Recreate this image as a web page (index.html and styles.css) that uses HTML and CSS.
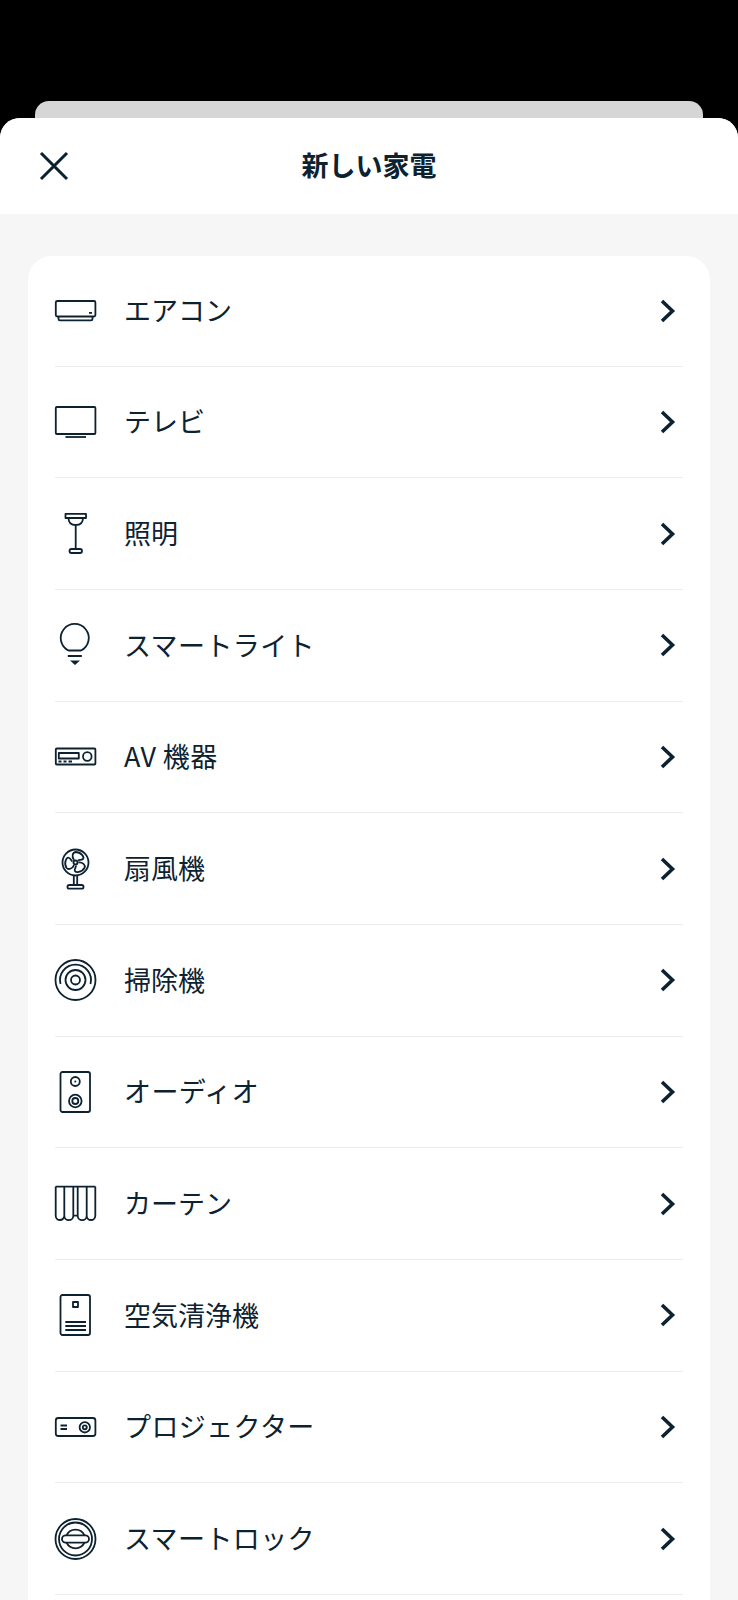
FILE: index.html
```html
<!DOCTYPE html>
<html lang="ja">
<head>
<meta charset="utf-8">
<title>新しい家電</title>
<link rel="stylesheet" href="styles.css">
</head>
<body>
<div class="screen">
  <div class="back-sheet"></div>
  <section class="sheet">
    <header class="sheet-header">
      <svg class="close" viewBox="0 0 30 30"><path d="M2 2 L28 28 M28 2 L2 28"/></svg>
      <h1 class="title">新しい家電</h1>
    </header>
    <main class="content">
      <ul class="card">
        <li class="row">
          <svg class="icon" viewBox="0 0 42 42"><rect x="0.8" y="11" width="39.6" height="15.5" rx="1.5"/><path d="M3.5 26.5 V29 Q3.5 30.3 5 30.3 H36 Q37.5 30.3 37.5 29 V26.5 M34 22.8 H37"/></svg>
          <span class="label">エアコン</span>
          <svg class="chev" viewBox="0 0 16 24"><path d="M2 2 L12.5 12 L2 22"/></svg>
        </li>
        <li class="row">
          <svg class="icon" viewBox="0 0 42 42"><rect x="0.8" y="6" width="39.6" height="27" rx="1"/><path d="M10.5 36 H31"/></svg>
          <span class="label">テレビ</span>
          <svg class="chev" viewBox="0 0 16 24"><path d="M2 2 L12.5 12 L2 22"/></svg>
        </li>
        <li class="row">
          <svg class="icon" viewBox="0 0 42 42"><path d="M10.5 0.8 H31 V5 H10.5 Z M13.5 5 Q13.5 12 20.7 12 Q28 12 28 5 M20.7 12 V36"/><rect x="14.5" y="36" width="12.5" height="4" rx="2"/></svg>
          <span class="label">照明</span>
          <svg class="chev" viewBox="0 0 16 24"><path d="M2 2 L12.5 12 L2 22"/></svg>
        </li>
        <li class="row">
          <svg class="icon" viewBox="0 0 42 42"><path d="M13.5 26.5 A14 14 0 1 1 26 26.5 Z M12.8 32 H26.8"/><path class="solid" d="M15 36.5 H25 L20 41 Z"/></svg>
          <span class="label wide">スマートライト</span>
          <svg class="chev" viewBox="0 0 16 24"><path d="M2 2 L12.5 12 L2 22"/></svg>
        </li>
        <li class="row">
          <svg class="icon" viewBox="0 0 42 42"><rect x="0.8" y="12.5" width="39.6" height="16" rx="1"/><rect x="3.8" y="17" width="20" height="5.5"/><circle cx="32.3" cy="20.5" r="4.3"/><path d="M3.5 25.5 H6.5 M8.5 25.5 H11.5 M13.5 25.5 H17"/></svg>
          <span class="label wide">AV 機器</span>
          <svg class="chev" viewBox="0 0 16 24"><path d="M2 2 L12.5 12 L2 22"/></svg>
        </li>
        <li class="row">
          <svg class="icon" viewBox="0 0 42 42"><circle cx="20.5" cy="14.5" r="13"/><circle cx="20.5" cy="14.5" r="2"/><path d="M-1.5 -2.5 C -4 -6 -3 -10 0 -10.5 C 6 -10.5 9 -5 7.5 -3.5 C 6 -2 4 -3 2.5 -2" transform="translate(20.5 14.5)"/><path d="M-1.5 -2.5 C -4 -6 -3 -10 0 -10.5 C 6 -10.5 9 -5 7.5 -3.5 C 6 -2 4 -3 2.5 -2" transform="translate(20.5 14.5) rotate(120)"/><path d="M-1.5 -2.5 C -4 -6 -3 -10 0 -10.5 C 6 -10.5 9 -5 7.5 -3.5 C 6 -2 4 -3 2.5 -2" transform="translate(20.5 14.5) rotate(240)"/><path d="M18.8 27.5 V37 M22.2 27.5 V37"/><rect x="12.5" y="37" width="16" height="3.7" rx="1.8"/></svg>
          <span class="label">扇風機</span>
          <svg class="chev" viewBox="0 0 16 24"><path d="M2 2 L12.5 12 L2 22"/></svg>
        </li>
        <li class="row">
          <svg class="icon" viewBox="0 0 42 42"><circle cx="20.5" cy="21" r="20"/><circle cx="20.5" cy="21" r="10"/><circle cx="20.5" cy="21" r="4.5"/><path d="M5.5 25 A15.5 15.5 0 1 1 35.5 25"/></svg>
          <span class="label">掃除機</span>
          <svg class="chev" viewBox="0 0 16 24"><path d="M2 2 L12.5 12 L2 22"/></svg>
        </li>
        <li class="row">
          <svg class="icon" viewBox="0 0 42 42"><rect x="5.5" y="1" width="29.5" height="40" rx="2"/><circle cx="20.3" cy="10.5" r="4.5"/><circle class="solid" cx="20.3" cy="10.5" r="1"/><circle cx="20.3" cy="30" r="6.3"/><circle cx="20.3" cy="30" r="3"/></svg>
          <span class="label wide">オーディオ</span>
          <svg class="chev" viewBox="0 0 16 24"><path d="M2 2 L12.5 12 L2 22"/></svg>
        </li>
        <li class="row">
          <svg class="icon" viewBox="0 0 42 42"><path d="M0.7 3.6 H40.3 M0.7 3.6 V32.7 A4.3 4.3 0 0 0 9.3 32.7 A4.5 4.5 0 0 0 18.3 32.7 V3.6 M9.3 3.6 V32.7 M18.3 32.7 H22.7 M22.7 3.6 V32.7 A4.5 4.5 0 0 0 31.7 32.7 A4.3 4.3 0 0 0 40.3 32.7 V3.6 M31.7 3.6 V32.7"/></svg>
          <span class="label">カーテン</span>
          <svg class="chev" viewBox="0 0 16 24"><path d="M2 2 L12.5 12 L2 22"/></svg>
        </li>
        <li class="row">
          <svg class="icon" viewBox="0 0 42 42"><rect x="5.5" y="1" width="29.5" height="40" rx="2"/><rect x="18" y="8" width="5" height="5"/><path d="M10.3 28 H31 M10.3 32 H31 M10.3 36 H31"/></svg>
          <span class="label">空気清浄機</span>
          <svg class="chev" viewBox="0 0 16 24"><path d="M2 2 L12.5 12 L2 22"/></svg>
        </li>
        <li class="row">
          <svg class="icon" viewBox="0 0 42 42"><rect x="0.8" y="12" width="39.6" height="18" rx="2.5"/><path d="M5.5 19.5 H12 M5.5 23 H12"/><circle cx="29.8" cy="21.3" r="5.2"/><circle cx="29.8" cy="21.3" r="2"/></svg>
          <span class="label wide">プロジェクター</span>
          <svg class="chev" viewBox="0 0 16 24"><path d="M2 2 L12.5 12 L2 22"/></svg>
        </li>
        <li class="row">
          <svg class="icon" viewBox="0 0 42 42"><circle cx="20.5" cy="21" r="20"/><circle cx="20.5" cy="21" r="16.5"/><rect x="7" y="17.3" width="27" height="7.4" rx="3.7"/><path d="M11.5 17.3 A10 10 0 0 1 29.5 17.3 M11.5 24.7 A10 10 0 0 0 29.5 24.7"/></svg>
          <span class="label wide">スマートロック</span>
          <svg class="chev" viewBox="0 0 16 24"><path d="M2 2 L12.5 12 L2 22"/></svg>
        </li>
      </ul>
    </main>
  </section>
</div>
</body>
</html>
```

FILE: styles.css
```css
* { box-sizing: border-box; }
html, body { margin: 0; padding: 0; background: #000; }
body {
  font-family: "Noto Sans CJK JP", "Noto Sans", sans-serif;
  color: #0d2231;
}
.screen {
  height: 1600px;
  overflow: hidden;
  padding-top: 101px;
  display: flex;
  flex-direction: column;
}
.back-sheet {
  flex: none;
  height: 17px;
  margin: 0 35px;
  background: #d6d6d6;
  border-radius: 14px 14px 0 0;
}
.sheet {
  flex: 1;
  background: #f6f6f6;
  border-radius: 20px 20px 0 0;
  overflow: hidden;
}
.sheet-header {
  height: 96px;
  padding-bottom: 3px;
  background: #fff;
  display: flex;
  align-items: center;
  justify-content: center;
  position: relative;
}
.close {
  position: absolute;
  left: 39px;
  top: 33px;
  width: 30px;
  height: 30px;
  fill: none;
  stroke: currentColor;
  stroke-width: 3.1;
}
.title {
  margin: 0;
  font-size: 27px;
  font-weight: 700;
  line-height: 1;
}
.content { padding: 42px 28px 0; }
.card {
  margin: 0;
  padding: 0 27px 40px;
  list-style: none;
  background: #fff;
  border-radius: 24px;
}
.row {
  height: 111.67px;
  display: flex;
  align-items: center;
  gap: 27px;
  border-bottom: 1px solid #ececec;
}
.row:first-child { height: 110.67px; }
.icon {
  flex: none;
  width: 42px;
  height: 42px;
  fill: none;
  stroke: currentColor;
  stroke-width: 1.8;
  stroke-linejoin: round;
  overflow: visible;
}
.icon .solid { fill: currentColor; stroke: none; }
.label {
  flex: 1;
  padding-bottom: 2px;
  font-size: 27px;
  line-height: 1;
}
.label.wide { letter-spacing: 0.4px; }
.chev {
  flex: none;
  width: 16px;
  height: 24px;
  margin-right: 7px;
  fill: none;
  stroke: currentColor;
  stroke-width: 3.6;
}
```
